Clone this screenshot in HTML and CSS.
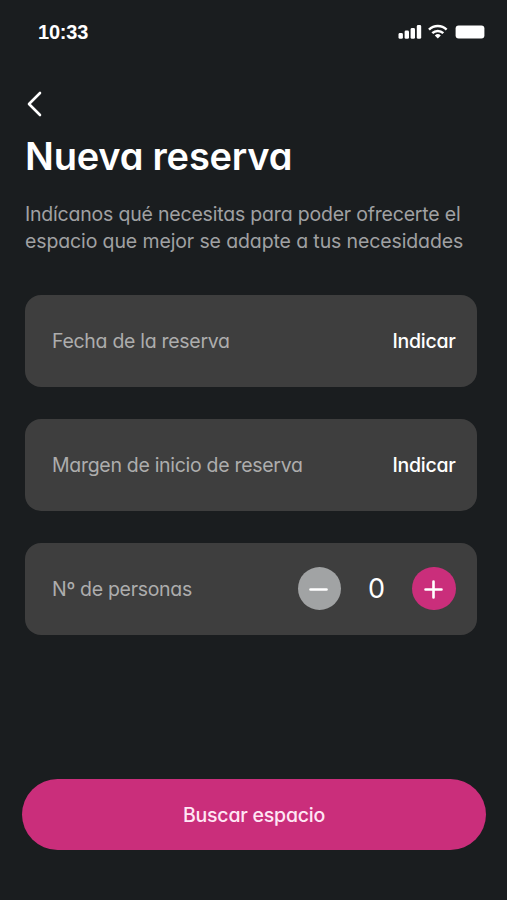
FILE: index.html
```html
<!doctype html>
<html lang="es">
	<head>
		<meta charset="utf-8">
		<title>Nueva reserva</title>
		<link rel="stylesheet" href="styles.css">
	</head>
	<body>
		<div class="screen">
			<div class="status-bar">
				<span class="time">10:33</span>
				<svg width="88" height="18" viewBox="0 0 88 18" fill="#fff">
					<rect x="0.5" y="11" width="4.4" height="5.8" rx="1.4" />
					<rect x="6.6" y="8.6" width="4.4" height="8.2" rx="1.4" />
					<rect x="12.6" y="6" width="4.4" height="10.8" rx="1.4" />
					<rect x="18.8" y="3" width="4.4" height="13.8" rx="1.4" />
					<g fill="none" stroke="#fff" stroke-width="2.5">
						<path d="M31 7.6a12.6 12.6 0 0 1 17.6 0" />
						<path d="M34.3 11.2a8 8 0 0 1 11 0" />
					</g>
					<path d="M36.8 13.4a4.4 4.4 0 0 1 6 0l-3 3z" />
					<rect x="57.6" y="3.6" width="28.8" height="12.8" rx="3" />
				</svg>
			</div>
			<a class="back" href="#">
				<svg width="20" height="28" viewBox="0 0 20 28" fill="none" stroke="#fff" stroke-width="2.6" stroke-linecap="round" stroke-linejoin="round">
					<path d="M16 3L5 14l11 11" />
				</svg>
			</a>
			<h1>Nueva reserva</h1>
			<p class="intro">Indícanos qué necesitas para poder ofrecerte el<br><span class="second-line">espacio que mejor se adapte a tus necesidades</span></p>
			<div class="fields">
				<div class="field">
					<span class="label">Fecha de la reserva</span>
					<a class="action" href="#">Indicar</a>
				</div>
				<div class="field">
					<span class="label">Margen de inicio de reserva</span>
					<a class="action" href="#">Indicar</a>
				</div>
				<div class="field">
					<span class="label">Nº de personas</span>
					<div class="stepper">
						<button class="step minus">
							<svg width="20" height="20" viewBox="0 0 20 20" stroke="#fff" stroke-width="2.6" stroke-linecap="round"><path d="M1.5 10.500h16" /></svg>
						</button>
						<span class="count">0</span>
						<button class="step plus">
							<svg width="20" height="20" viewBox="0 0 20 20" stroke="#fff" stroke-width="2.6" stroke-linecap="round"><path d="M1.5 10.500h16M9.500 2.500v16" /></svg>
						</button>
					</div>
				</div>
			</div>
			<button class="submit">Buscar espacio</button>
		</div>
	</body>
</html>
```

FILE: styles.css
```css
body {
	margin: 0;
	background-color: #1a1d1f;
	color: #fff;
	font-family: Inter, sans-serif;
	font-feature-settings: "cv11";
	font-size: 19.5px;
}

a {
	color: inherit;
	text-decoration: none;
}

button {
	border: 0;
	padding: 0;
	color: inherit;
	font: inherit;
	font-feature-settings: inherit;
}

svg {
	display: block;
}

.screen {
	box-sizing: border-box;
	height: 900px;
	display: flex;
	flex-direction: column;
	padding: 22px 21px 49.6px 22px;
}

.status-bar {
	display: flex;
	justify-content: space-between;
	height: 20px;
	padding-left: 16px;
}

.time {
	font-family: "Liberation Sans", sans-serif;
	font-size: 20px;
	line-height: 20px;
	font-weight: bold;
	letter-spacing: -0.2px;
}

.back {
	width: 20px;
	margin: 48px 0 0 2px;
}

h1 {
	margin: 14px 0 0 3px;
	font-size: 38px;
	line-height: 48px;
	font-weight: 600;
	letter-spacing: -0.2px;
	white-space: nowrap;
}

.intro {
	margin: 21px 0 0 3px;
	line-height: 27px;
	letter-spacing: -0.2px;
	color: #a0a1a3;
	white-space: nowrap;
}

.second-line {
	letter-spacing: -0.12px;
}

.fields {
	display: flex;
	flex-direction: column;
	gap: 32px;
	margin: 39.5px 9px 0 3px;
}

.field {
	box-sizing: border-box;
	height: 92px;
	display: flex;
	align-items: center;
	justify-content: space-between;
	padding: 0 21.5px 0 27px;
	border-radius: 16px;
	background-color: #3e3e3e;
}

.label {
	padding-top: 1px;
	letter-spacing: -0.3px;
	color: #adadad;
}

.action {
	padding-top: 1px;
	font-weight: 500;
	letter-spacing: -0.25px;
}

.stepper {
	display: flex;
	align-items: center;
}

.step {
	width: 43.5px;
	height: 43.5px;
	display: flex;
	align-items: center;
	justify-content: center;
	border-radius: 50%;
}

.minus {
	background-color: #a1a3a4;
}

.plus {
	background-color: #ca2e7b;
}

.count {
	width: 71px;
	text-align: center;
	font-size: 27px;
}

.submit {
	height: 71px;
	margin-top: auto;
	border-radius: 36px;
	background-color: #ca2e7b;
	color: #ffe6f5;
	font-weight: 500;
	letter-spacing: -0.22px;
}
```
